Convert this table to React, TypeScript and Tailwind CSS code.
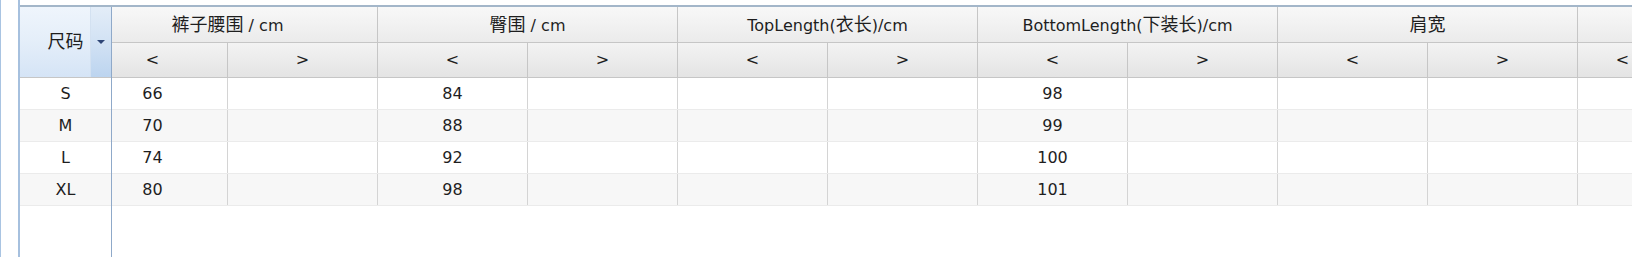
import React from 'react';

// header groups of the size table, widths include the 1px right border
const groups = [
    { label: '裤子腰围 / cm', wide: true },
    { label: '臀围 / cm', wide: true },
    { label: 'TopLength(衣长)/cm', wide: true },
    { label: 'BottomLength(下装长)/cm', wide: true },
    { label: '肩宽', wide: true },
    { label: '', wide: false },
];

const rows = [
    { size: 'S', values: ['66', '', '84', '', '', '', '98', '', '', '', '', ''] },
    { size: 'M', values: ['70', '', '88', '', '', '', '99', '', '', '', '', ''] },
    { size: 'L', values: ['74', '', '92', '', '', '', '100', '', '', '', '', ''] },
    { size: 'XL', values: ['80', '', '98', '', '', '', '101', '', '', '', '', ''] },
];

// CJK glyphs render a bit larger than the latin text in the original
const Label: React.FC<{ text: string }> = ({ text }) => (
    <span className="whitespace-pre">
        {text.split(/([\u4e00-\u9fff]+)/).map((part, i) =>
            /[\u4e00-\u9fff]/.test(part) ? (
                <span key={i} className="text-[18px]">{part}</span>
            ) : (
                <span key={i}>{part}</span>
            )
        )}
    </span>
);

const App: React.FC = () => {
    return (
        <div className="flex h-[257px] w-[1632px] overflow-hidden bg-white text-[16px] leading-none text-[#1e1e1e] font-['DejaVu_Sans','Noto_Sans_CJK_SC',sans-serif]">
            {/* window frame on the left */}
            <div className="w-px h-full bg-[#a9c4e2]" />
            <div className="w-[17px] h-full" />
            <div className="w-[2px] h-full bg-[#a6c0de]" />

            <div className="flex flex-col flex-1 min-w-0">
                <div className="h-[5px]" />
                <div className="h-[2px] bg-[#a3b6c9]" />

                <div className="flex flex-1 min-h-0">
                    {/* frozen size column */}
                    <div className="flex flex-col w-[92px] shrink-0 border-r border-[#8fa9c9]">
                        <div className="relative flex items-center justify-center h-[71px] border-b border-[#c6c6c6] bg-linear-to-b from-[#eff5fc] via-[#e4eef9] to-[#d5e4f6]">
                            <Label text="尺码" />
                            <div className="absolute right-0 top-0 flex items-center justify-center h-full w-[21px] border-l border-[#d3e1f1] bg-linear-to-b from-[#e3edf8] via-[#d2e2f4] to-[#bcd4ef]">
                                <div className="w-0 h-0 border-x-[4px] border-t-[4px] border-x-transparent border-t-[#2e4677]" />
                            </div>
                        </div>
                        {rows.map((row, i) => (
                            <div
                                key={row.size}
                                className={`flex items-center justify-center h-[32px] border-b border-[#ebebeb] ${i % 2 === 1 ? 'bg-[#f7f7f7]' : 'bg-white'}`}
                            >
                                {row.size}
                            </div>
                        ))}
                    </div>

                    {/* scrolled part of the grid */}
                    <div className="flex-1 min-w-0 overflow-hidden">
                        <div className="ml-[-34px] w-max">
                            {/* group headers */}
                            <div className="flex h-[36px] border-b border-[#c6c6c6] bg-linear-to-b from-[#f8f8f8] to-[#ebebeb]">
                                {groups.map((g, i) => (
                                    <div
                                        key={i}
                                        className={`flex items-center justify-center shrink-0 border-r border-[#c6c6c6] ${g.wide ? 'w-[300px]' : 'w-[180px]'}`}
                                    >
                                        <Label text={g.label} />
                                    </div>
                                ))}
                            </div>
                            {/* < > sub headers */}
                            <div className="flex h-[35px] border-b border-[#c6c6c6] bg-linear-to-b from-[#f3f3f3] to-[#e4e4e4]">
                                {groups.map((g, i) => (
                                    <React.Fragment key={i}>
                                        <div className={`flex items-center justify-center shrink-0 border-r border-[#c6c6c6] ${g.wide ? 'w-[150px]' : 'w-[90px]'}`}>&lt;</div>
                                        <div className={`flex items-center justify-center shrink-0 border-r border-[#c6c6c6] ${g.wide ? 'w-[150px]' : 'w-[90px]'}`}>&gt;</div>
                                    </React.Fragment>
                                ))}
                            </div>
                            {rows.map((row, r) => (
                                <div
                                    key={row.size}
                                    className={`flex h-[32px] border-b border-[#ebebeb] ${r % 2 === 1 ? 'bg-[#f7f7f7]' : 'bg-white'}`}
                                >
                                    {row.values.map((v, c) => (
                                        <div
                                            key={c}
                                            className={`flex items-center justify-center shrink-0 border-r border-[#d4d4d4] ${c < 10 ? 'w-[150px]' : 'w-[90px]'}`}
                                        >
                                            {v}
                                        </div>
                                    ))}
                                </div>
                            ))}
                        </div>
                    </div>
                </div>
            </div>
        </div>
    );
};

export default App;
